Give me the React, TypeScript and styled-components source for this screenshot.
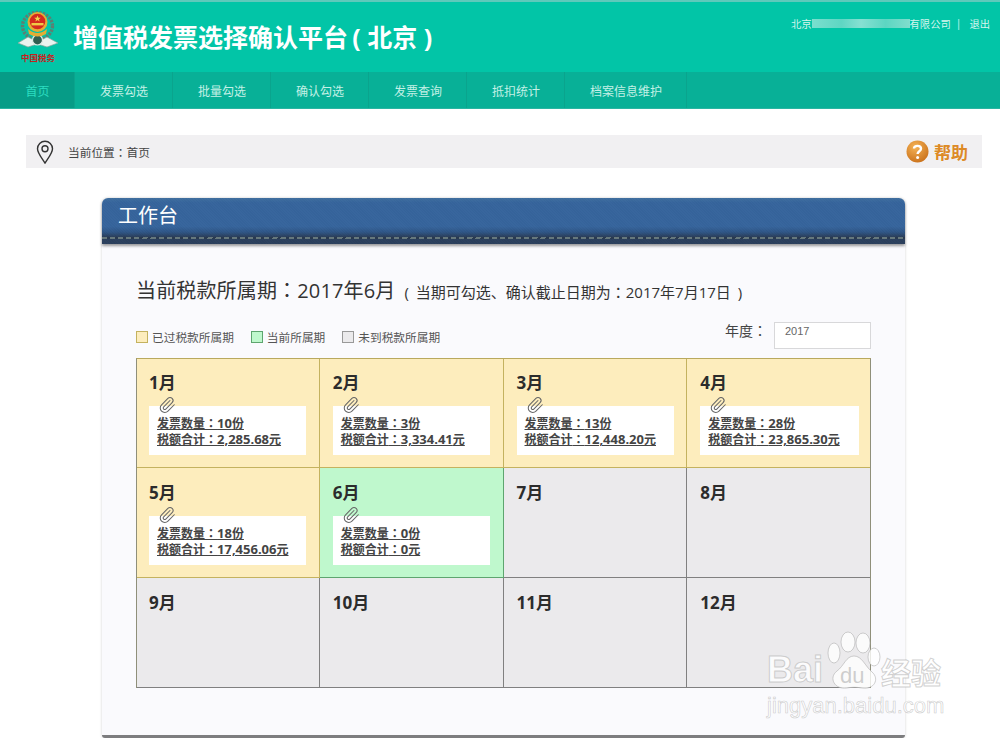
import React from "react"
import styled, { createGlobalStyle } from "styled-components"
import { Paperclip } from "lucide-react"

const FONT = `"Open Sans", "Noto Sans CJK SC", sans-serif`

const GlobalStyle = createGlobalStyle`
  html, body {
    margin: 0;
    padding: 0;
    background: #ffffff;
    font-family: ${FONT};
    overflow: hidden;
  }
`

const Page = styled.div`
  position: relative;
  width: 1000px;
  height: 738px;
  overflow: hidden;
  background: #fff;
`

// 全角コロン(中央寄せのグリフ)
const Colon = styled.span`
  font-family: "Noto Sans CJK TC", sans-serif;
  line-height: 1;
`

// ヘッダー
const Header = styled.header`
  height: 72px;
  box-sizing: border-box;
  background: #02c5a7;
  border-top: 2px solid #5fc9bb;
  display: flex;
  justify-content: space-between;
`

const Brand = styled.div`
  display: flex;
  align-items: flex-start;
  padding: 8px 0 0 18px;
`

const Emblem = styled.div`
  width: 40px;
  display: flex;
  flex-direction: column;
  align-items: center;
`

const EmblemCaption = styled.span`
  font-size: 8.5px;
  line-height: 11px;
  font-weight: 700;
  color: #c8201c;
  white-space: nowrap;
`

const SiteTitle = styled.h1`
  margin: 11px 0 0 15px;
  font-size: 25px;
  line-height: 32px;
  font-weight: 700;
  color: #fff;
  white-space: nowrap;
`

const UserBar = styled.div`
  display: flex;
  align-items: center;
  height: 12px;
  margin: 15px 10px 0 0;
  font-size: 10.3px;
  color: #d5f5ee;
  white-space: nowrap;
`

const Blurred = styled.span`
  width: 98px;
  height: 9px;
  background: linear-gradient(90deg, #7adfce, #5fd6c3 30%, #86e0d2 50%, #5cd6c2 75%, #80ddcd);
`

const Pipe = styled.span`
  margin: 0 8px 0 5px;
`

// ナビ
const Nav = styled.nav`
  display: flex;
  height: 37px;
  background: #08b097;
  border-bottom: 1px solid #2ab5a2;
  box-sizing: border-box;
`

const NavItem = styled.a<{ $w: number; $active?: boolean }>`
  width: ${(p) => p.$w}px;
  box-sizing: border-box;
  display: flex;
  align-items: center;
  justify-content: center;
  padding: 1px 0 0 1px;
  font-size: 12px;
  color: ${(p) => (p.$active ? "#2cdcc0" : "#c4f0e6")};
  background: ${(p) => (p.$active ? "#069c87" : "transparent")};
  border-right: 1px solid #0aa48d;
`

// パンくず
const Crumb = styled.div`
  display: flex;
  align-items: center;
  height: 33px;
  margin: 26px 18px 0 26px;
  padding: 0 14px 0 9px;
  background: #f1f0f2;
`

const CrumbText = styled.span`
  margin-left: 13px;
  font-size: 11.7px;
  color: #444;
  flex: 1;
`

const HelpLink = styled.a`
  display: flex;
  align-items: center;
  gap: 5px;
  font-size: 17px;
  font-weight: 700;
  color: #dd8a26;
`

// 工作台
const Panel = styled.section`
  width: 803px;
  height: 540px;
  box-sizing: border-box;
  margin: 30px 0 0 102px;
  background: #fafafd;
  border-radius: 6px 6px 3px 3px;
  border-bottom: 3px solid #7d7d7f;
  box-shadow: 0 0 3px rgba(0, 0, 0, 0.18);
  display: flex;
  flex-direction: column;
`

const PanelHead = styled.div`
  position: relative;
  height: 46px;
  flex: none;
  box-sizing: border-box;
  padding: 5px 0 0 16px;
  font-size: 20px;
  line-height: 26px;
  color: #fff;
  background:
    repeating-linear-gradient(45deg, rgba(255, 255, 255, 0.012) 0 1px, rgba(0, 0, 0, 0.012) 1px 2px),
    linear-gradient(180deg, #3f6f9f 0%, #36649c 10%, #36649c 62%, #2f5687 74%, #2a3f5c 84%, #2a3f5c 100%);
  border-radius: 6px 6px 0 0;
  box-shadow: 0 2px 3px rgba(0, 0, 0, 0.4);
`

const Stitch = styled.div`
  position: absolute;
  left: 0;
  right: 0;
  bottom: 5px;
  height: 2px;
  background: repeating-linear-gradient(100deg, #66787c 0 5px, #2a3a50 5px 8px);
`

const PanelBody = styled.div`
  padding: 33px 34px 0;
`

const PeriodTitle = styled.div`
  font-size: 20px;
  line-height: 28px;
  letter-spacing: 0.15px;
  color: #333;
  white-space: nowrap;
`

const PeriodNote = styled.span`
  font-size: 15px;
  margin-left: 9px;
  letter-spacing: 0;
  word-spacing: 3px;
`

const ToolRow = styled.div`
  display: flex;
  align-items: flex-start;
  height: 36px;
  margin-top: 16px;
`

const Legend = styled.div`
  display: flex;
  gap: 17px;
  margin-top: 8px;
  flex: 1;
`

const LegendItem = styled.span`
  display: flex;
  align-items: center;
  gap: 4px;
  font-size: 11.7px;
  line-height: 14px;
  color: #555;
`

const Swatch = styled.i<{ $c: string; $b: string }>`
  width: 10px;
  height: 10px;
  background: ${(p) => p.$c};
  border: 1px solid ${(p) => p.$b};
`

const YearLabel = styled.span`
  font-size: 14px;
  line-height: 18px;
  color: #444;
  margin-right: 7px;
`

const YearField = styled.div`
  width: 97px;
  height: 27px;
  box-sizing: border-box;
  border: 1px solid #d8d8da;
  background: #fff;
  padding: 2px 0 0 10px;
  font-family: "Liberation Sans", sans-serif;
  font-size: 11px;
  line-height: 13px;
  color: #666;
`

const MonthGrid = styled.div`
  position: relative;
  display: grid;
  grid-template-columns: repeat(4, 1fr);
  grid-auto-rows: 110px;
  width: 735px;

  /* 外枠はセルの上に重ねる */
  &::after {
    content: "";
    position: absolute;
    inset: 0;
    box-sizing: border-box;
    border-top: 1px solid #b9a95e;
    border-left: 1px solid #8f8f7a;
    border-right: 1px solid #8f8f7a;
    pointer-events: none;
  }
`

const tones = {
  past: { bg: "#fdedbd", line: "#c4b25f" },
  now: { bg: "#bff8cd", line: "#5ea56f" },
  later: { bg: "#ebeaec", line: "#808080" },
}

const MonthCell = styled.div<{ $tone: keyof typeof tones }>`
  position: relative;
  box-sizing: border-box;
  padding: 15px 12.5px 0 13px;
  background: ${(p) => tones[p.$tone].bg};
  border-bottom: 1px solid ${(p) => tones[p.$tone].line};
  border-right: 1px solid ${(p) => tones[p.$tone].line};
  &:nth-child(4n) {
    border-right: none;
  }
`

const MonthName = styled.div`
  font-size: 17px;
  line-height: 20px;
  font-weight: 700;
  color: #2c2c2c;
`

const Summary = styled.div`
  position: relative;
  margin-top: 13px;
  height: 49px;
  box-sizing: border-box;
  padding: 10px 0 0 8px;
  background: #fff;
  font-size: 12px;
  line-height: 16px;
  font-weight: 700;
  color: #444;
  text-decoration: underline;
  white-space: nowrap;
`

const Figure = styled.span`
  font-size: 13px;
  line-height: 1;
`

const Clip = styled(Paperclip)`
  position: absolute;
  left: 9px;
  top: -10px;
  color: #666;
`

// ウォーターマーク
const Watermark = styled.div`
  position: absolute;
  left: 766px;
  top: 630px;
  width: 190px;
  height: 100px;
  color: rgba(255, 255, 255, 0.85);
  -webkit-text-stroke: 1px rgba(170, 170, 170, 0.55);
`

const MarkPaw = styled.svg`
  position: absolute;
  left: 58px;
  top: 0;
`

const MarkBai = styled.span`
  position: absolute;
  left: 1px;
  top: 18px;
  font-family: "Liberation Sans", sans-serif;
  font-size: 36px;
  line-height: 44px;
  font-weight: 700;
`

const MarkDu = styled.span`
  position: absolute;
  left: 74px;
  top: 33px;
  font-family: "Liberation Sans", sans-serif;
  font-size: 22px;
  line-height: 26px;
  color: rgba(190, 190, 190, 0.75);
  -webkit-text-stroke: 0;
`

const MarkJing = styled.span`
  position: absolute;
  left: 115px;
  top: 23px;
  font-size: 30px;
  line-height: 40px;
  font-weight: 700;
  white-space: nowrap;
`

const MarkUrl = styled.span`
  position: absolute;
  left: 1px;
  top: 63px;
  font-family: "Liberation Sans", sans-serif;
  font-size: 22px;
  line-height: 26px;
  white-space: nowrap;
  -webkit-text-stroke: 0.6px rgba(170, 170, 170, 0.6);
`

const navItems = [
  { label: "首页", w: 75, active: true },
  { label: "发票勾选", w: 98 },
  { label: "批量勾选", w: 98 },
  { label: "确认勾选", w: 98 },
  { label: "发票查询", w: 98 },
  { label: "抵扣统计", w: 98 },
  { label: "档案信息维护", w: 122 },
]

type Month = { name: string; tone: keyof typeof tones; count?: string; total?: string }

const months: Month[] = [
  { name: "1月", tone: "past", count: "10", total: "2,285.68" },
  { name: "2月", tone: "past", count: "3", total: "3,334.41" },
  { name: "3月", tone: "past", count: "13", total: "12,448.20" },
  { name: "4月", tone: "past", count: "28", total: "23,865.30" },
  { name: "5月", tone: "past", count: "18", total: "17,456.06" },
  { name: "6月", tone: "now", count: "0", total: "0" },
  { name: "7月", tone: "later" },
  { name: "8月", tone: "later" },
  { name: "9月", tone: "later" },
  { name: "10月", tone: "later" },
  { name: "11月", tone: "later" },
  { name: "12月", tone: "later" },
]

const TaxEmblem = () => (
  <svg width="40" height="42" viewBox="0 0 40 42">
    <ellipse cx="19.5" cy="16" rx="15" ry="13.5" fill="none" stroke="#5d7f72" strokeWidth="3.4" strokeDasharray="2.4 1.2" />
    <path d="M0 33 L10 27 L19.5 32 L29 27 L40 33 L29 37 L19.5 34 L10 37 Z" fill="#e9f3ef" stroke="#8ba39b" strokeWidth="0.7" />
    <circle cx="19.5" cy="30" r="5" fill="#2f5e51" stroke="#dfe9e4" strokeWidth="1.2" />
    <circle cx="19.5" cy="12" r="10" fill="#e4ad35" />
    <circle cx="19.5" cy="11.5" r="7.8" fill="#d5291f" />
    <path d="M19.5 5.6 l0.9 2.2 2.4 0 -1.9 1.4 0.7 2.2 -2.1 -1.4 -2.1 1.4 0.7 -2.2 -1.9 -1.4 2.4 0z" fill="#f3d24a" />
    <path d="M13.5 13 h12 v2.4 h-12z" fill="#f0c945" />
    <path d="M10 19 Q19.5 27 29 19 L28 24 Q19.5 29 11 24 Z" fill="#e4ad35" />
  </svg>
)

const PinIcon = () => (
  <svg width="20" height="24" viewBox="0 0 20 24" fill="none" stroke="#333" strokeWidth="1.4">
    <path d="M10 23 C6 17 2.5 13 2.5 8.8 A7.5 7.5 0 0 1 17.5 8.8 C17.5 13 14 17 10 23 Z" />
    <circle cx="10" cy="8.8" r="3" />
  </svg>
)

const HelpIcon = () => (
  <svg width="23" height="23" viewBox="0 0 23 23">
    <defs>
      <radialGradient id="helpBall" cx="40%" cy="30%" r="75%">
        <stop offset="0%" stopColor="#f5b356" />
        <stop offset="100%" stopColor="#c9701a" />
      </radialGradient>
    </defs>
    <circle cx="11.5" cy="11.5" r="11" fill="url(#helpBall)" />
    <path d="M8 8.6 C8 5 15 5 15 8.8 C15 11.4 11.6 11.2 11.6 14" fill="none" stroke="#fff" strokeWidth="2.4" />
    <circle cx="11.6" cy="17.4" r="1.5" fill="#fff" />
  </svg>
)

const App = () => (
  <Page>
    <GlobalStyle />
    <Header>
      <Brand>
        <Emblem>
          <TaxEmblem />
          <EmblemCaption>中国税务</EmblemCaption>
        </Emblem>
        <SiteTitle>增值税发票选择确认平台{"\u2009"}( 北京 )</SiteTitle>
      </Brand>
      <UserBar>
        北京
        <Blurred />
        有限公司
        <Pipe>|</Pipe>
        退出
      </UserBar>
    </Header>
    <Nav>
      {navItems.map((item) => (
        <NavItem key={item.label} $w={item.w} $active={item.active}>
          {item.label}
        </NavItem>
      ))}
    </Nav>
    <Crumb>
      <PinIcon />
      <CrumbText>
        当前位置<Colon>：</Colon>首页
      </CrumbText>
      <HelpLink>
        <HelpIcon />
        帮助
      </HelpLink>
    </Crumb>
    <Panel>
      <PanelHead>
        工作台
        <Stitch />
      </PanelHead>
      <PanelBody>
        <PeriodTitle>
          当前税款所属期<Colon>：</Colon>2017年6月
          <PeriodNote>
            ( 当期可勾选、确认截止日期为<Colon>：</Colon>2017年7月17日 )
          </PeriodNote>
        </PeriodTitle>
        <ToolRow>
          <Legend>
            <LegendItem>
              <Swatch $c="#fdedbd" $b="#c4b25f" />
              已过税款所属期
            </LegendItem>
            <LegendItem>
              <Swatch $c="#bff8cd" $b="#5ea56f" />
              当前所属期
            </LegendItem>
            <LegendItem>
              <Swatch $c="#ebeaec" $b="#999" />
              未到税款所属期
            </LegendItem>
          </Legend>
          <YearLabel>
            年度<Colon>：</Colon>
          </YearLabel>
          <YearField>2017</YearField>
        </ToolRow>
        <MonthGrid>
          {months.map((m) => (
            <MonthCell key={m.name} $tone={m.tone}>
              <MonthName>{m.name}</MonthName>
              {m.count !== undefined && (
                <Summary>
                  <Clip size={18} strokeWidth={1.4} />
                  发票数量<Colon>：</Colon>
                  <Figure>{m.count}</Figure>份
                  <br />
                  税额合计<Colon>：</Colon>
                  <Figure>{m.total}</Figure>元
                </Summary>
              )}
            </MonthCell>
          ))}
        </MonthGrid>
      </PanelBody>
    </Panel>
    <Watermark>
      <MarkPaw width="60" height="62" viewBox="0 0 60 62" fill="rgba(255,255,255,0.8)" stroke="rgba(170,170,170,0.55)">
        <ellipse cx="10" cy="23" rx="6" ry="10" />
        <ellipse cx="24" cy="12" rx="7" ry="10" />
        <ellipse cx="39" cy="13" rx="7" ry="10" />
        <ellipse cx="50" cy="27" rx="6" ry="9" />
        <path d="M30 26 C22 26 20 36 13 41 C4 48 11 60 23 58 C28 57 32 57 38 58 C50 60 56 49 48 42 C41 36 38 26 30 26 Z" />
      </MarkPaw>
      <MarkBai>Bai</MarkBai>
      <MarkDu>du</MarkDu>
      <MarkJing>经验</MarkJing>
      <MarkUrl>jingyan.baidu.com</MarkUrl>
    </Watermark>
  </Page>
)

export default App
